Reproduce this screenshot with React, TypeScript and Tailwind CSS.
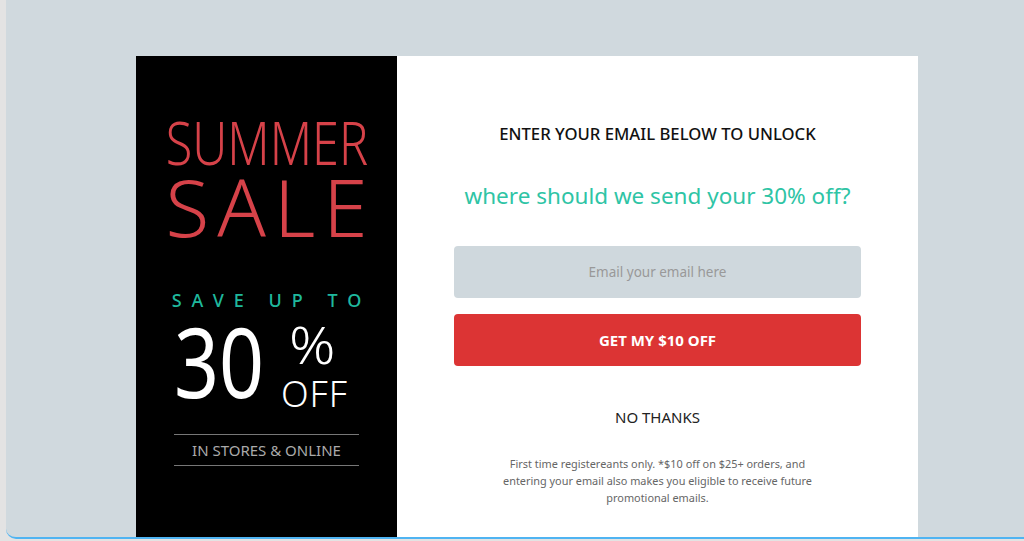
import React from "react";

export default function App() {
  return (
    <div className="w-[1024px] h-[541px] bg-[#e3e3e3] overflow-hidden" style={{ fontFamily: '"Noto Sans", "Open Sans", sans-serif' }}>
      <div className="ml-[6px] h-[539px] bg-[#d0d9de] border-b-2 border-[#4fb4f2] rounded-bl-[10px] overflow-hidden pt-[56px] pl-[130px]">
        <div className="flex w-[782px] h-[520px]">
          <div className="w-[261px] bg-black flex flex-col items-center pt-[56px]">
            <div className="text-[#d64249] font-light text-[60px] leading-none scale-x-[0.81]">SUMMER</div>
            <div className="text-[#d64249] font-light text-[80px] leading-none tracking-[8px] mt-[-6px] pl-[8px]">SALE</div>
            <div className="text-[#1fb89d] text-[18px] leading-none tracking-[10px] mt-[45px] pl-[10px] font-medium">SAVE UP TO</div>
            <div className="flex items-start mt-[4px] mr-[12px]">
              <div className="w-[86px] text-white text-[96px] leading-none font-normal">
                <span className="inline-block origin-left scale-x-[0.82]">30</span>
              </div>
              <div className="w-[66px] ml-[22px] flex flex-col items-center">
                <div className="text-white text-[52px] leading-none font-light mt-[5px] scale-x-[1.1] mr-[4px]">%</div>
                <div className="text-white text-[36px] leading-none font-light mt-[6px] tracking-[1px]">OFF</div>
              </div>
            </div>
            <div className="w-[185px] mt-[22px] border-t border-b border-[#777] py-[6px] text-center text-[#aaa] text-[15px] leading-[18px]">IN STORES &amp; ONLINE</div>
          </div>
          <div className="w-[521px] bg-white flex flex-col items-center pt-[66px]">
            <div className="text-[#111] text-[16.7px] font-medium leading-[24px]">ENTER YOUR EMAIL BELOW TO UNLOCK</div>
            <div className="text-[#2ec4a5] text-[22.5px] leading-[30px] mt-[35px]">where should we send your 30% off?</div>
            <div className="w-[407px] h-[52px] mt-[35px] bg-[#cfd8dd] rounded-[4px] flex items-center justify-center text-[#999] text-[13.5px]">Email your email here</div>
            <div className="w-[407px] h-[52px] mt-[16px] bg-[#dc3434] rounded-[4px] flex items-center justify-center text-white text-[15px] font-bold">GET MY $10 OFF</div>
            <div className="text-[#222] text-[15px] leading-[20px] mt-[41px]">NO THANKS</div>
            <div className="w-[320px] text-center text-[#666] text-[10.9px] leading-[17px] mt-[28px]">First time registereants only. *$10 off on $25+ orders, and entering your email also makes you eligible to receive future promotional emails.</div>
          </div>
        </div>
      </div>
    </div>
  );
}
